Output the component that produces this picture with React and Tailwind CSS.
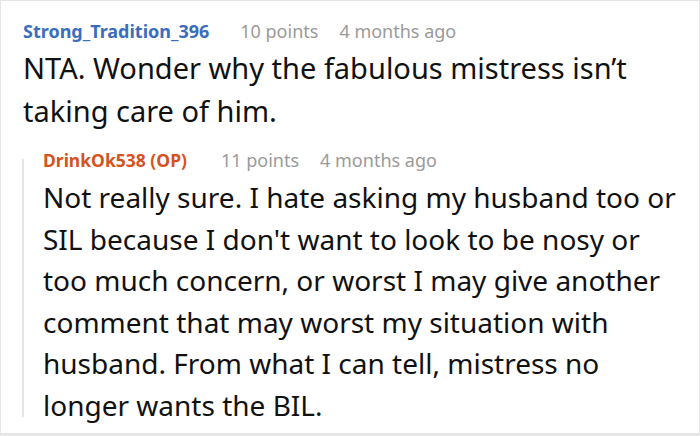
export default function App() {
  return (
    <div
      className="w-[700px] h-[436px] bg-white border border-[#e5e5e5] border-b-[3px] overflow-hidden"
      style={{ fontFamily: '"Noto Sans", "Open Sans", sans-serif' }}
    >
      {/* top-level comment */}
      <div className="pl-[22px] pt-[18px]">
        <div className="flex items-baseline text-[18px] leading-[24px]">
          <span className="font-bold text-[#3b6dbf] mr-[31px]">Strong_Tradition_396</span>
          <span className="text-[#9a9a9a] mr-[21px]">10 points</span>
          <span className="text-[#9a9a9a]">4 months ago</span>
        </div>
        <p className="mt-[3px] text-[29px] leading-[43px] text-[#111] whitespace-nowrap">
          NTA. Wonder why the fabulous mistress isn’t
          <br />
          taking care of him.
        </p>
      </div>

      {/* reply */}
      <div className="ml-[21px] mt-[16px] flex">
        <div className="w-[2px] bg-[#e6e6e6] mt-[11px] mb-[10px] shrink-0" />
        <div className="pl-[19px]">
          <div className="flex items-baseline leading-[24px]">
            <span className="text-[17.5px] font-bold text-[#d4531f] mr-[34px]">DrinkOk538 (OP)</span>
            <span className="text-[18px] text-[#9a9a9a] mr-[21px]">11 points</span>
            <span className="text-[18px] text-[#9a9a9a]">4 months ago</span>
          </div>
          <p className="mt-[5px] text-[28px] leading-[41.6px] text-[#111] whitespace-nowrap">
            Not really sure. I hate asking my husband too or
            <br />
            SIL because I don't want to look to be nosy or
            <br />
            too much concern, or worst I may give another
            <br />
            comment that may worst my situation with
            <br />
            husband. From what I can tell, mistress no
            <br />
            longer wants the BIL.
          </p>
        </div>
      </div>
    </div>
  );
}
